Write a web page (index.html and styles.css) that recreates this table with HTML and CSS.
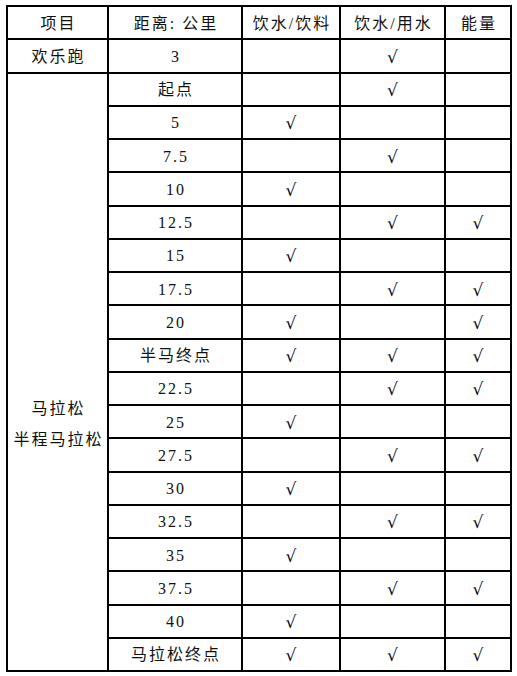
FILE: index.html
```html
<!DOCTYPE html>
<html lang="zh">
<head>
<meta charset="utf-8">
<title>补给站</title>
<link rel="stylesheet" href="styles.css">
</head>
<body>
<table class="supply">
  <colgroup>
    <col class="c1"><col class="c2"><col class="c3"><col class="c4"><col class="c5">
  </colgroup>
  <tr><td>项目</td><td>距离: 公里</td><td>饮水/饮料</td><td>饮水/用水</td><td>能量</td></tr>
  <tr><td>欢乐跑</td><td>3</td><td></td><td class="ck">√</td><td></td></tr>
  <tr><td rowspan="18" class="merged">马拉松<br>半程马拉松</td><td>起点</td><td></td><td class="ck">√</td><td></td></tr>
  <tr><td>5</td><td class="ck">√</td><td></td><td></td></tr>
  <tr><td>7.5</td><td></td><td class="ck">√</td><td></td></tr>
  <tr><td>10</td><td class="ck">√</td><td></td><td></td></tr>
  <tr><td>12.5</td><td></td><td class="ck">√</td><td class="ck">√</td></tr>
  <tr><td>15</td><td class="ck">√</td><td></td><td></td></tr>
  <tr><td>17.5</td><td></td><td class="ck">√</td><td class="ck">√</td></tr>
  <tr><td>20</td><td class="ck">√</td><td></td><td class="ck">√</td></tr>
  <tr><td>半马终点</td><td class="ck">√</td><td class="ck">√</td><td class="ck">√</td></tr>
  <tr><td>22.5</td><td></td><td class="ck">√</td><td class="ck">√</td></tr>
  <tr><td>25</td><td class="ck">√</td><td></td><td></td></tr>
  <tr><td>27.5</td><td></td><td class="ck">√</td><td class="ck">√</td></tr>
  <tr><td>30</td><td class="ck">√</td><td></td><td></td></tr>
  <tr><td>32.5</td><td></td><td class="ck">√</td><td class="ck">√</td></tr>
  <tr><td>35</td><td class="ck">√</td><td></td><td></td></tr>
  <tr><td>37.5</td><td></td><td class="ck">√</td><td class="ck">√</td></tr>
  <tr><td>40</td><td class="ck">√</td><td></td><td></td></tr>
  <tr><td>马拉松终点</td><td class="ck">√</td><td class="ck">√</td><td class="ck">√</td></tr>
</table>
</body>
</html>
```
FILE: styles.css
```css
html, body {
  margin: 0;
  padding: 0;
  background: #fff;
}
body {
  font-family: "Liberation Serif", "Noto Sans CJK SC", serif;
  color: #111;
}
.supply {
  margin: 5px 0 0 6px;
  border-collapse: collapse;
  table-layout: fixed;
  width: 506px;
}
.c1 { width: 101px; }
.c2 { width: 134px; }
.c3 { width: 98px; }
.c4 { width: 105px; }
.c5 { width: 66px; }
.supply tr {
  height: 33.25px;
}
.supply td {
  border: 2px solid #000;
  padding: 2px 0 0 2px;
  text-align: center;
  vertical-align: middle;
  font-size: 16px;
  letter-spacing: 2px;
  line-height: 20px;
  white-space: nowrap;
}
.supply td.merged {
  line-height: 31px;
  padding-top: 104px;
}
.supply td.ck {
  font-family: "DejaVu Serif", "Liberation Serif", serif;
  font-size: 17px;
  letter-spacing: 0;
  padding-left: 0;
  color: #0b0b1a;
}
```
